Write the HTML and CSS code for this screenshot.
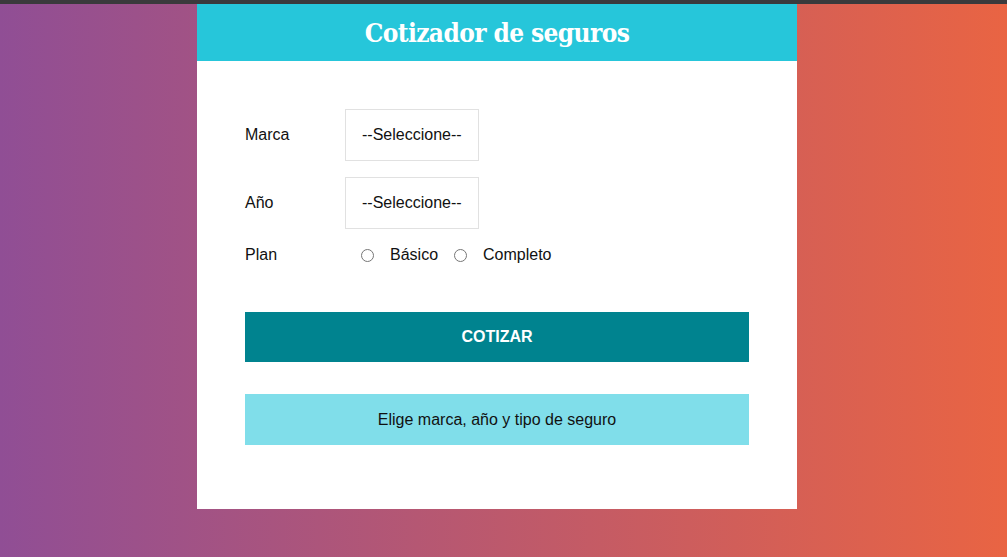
FILE: index.html
```html
<!DOCTYPE html>
<html lang="es">
<head>
<meta charset="utf-8">
<title>Cotizador de seguros</title>
<link rel="stylesheet" href="styles.css">
</head>
<body>
<div class="topbar"></div>
<div class="page">
<main class="card">
  <header class="card-header">
    <h1 class="title">Cotizador de seguros</h1>
  </header>
  <form class="form">
    <div class="field">
      <label class="field-label" for="marca">Marca</label>
      <select id="marca" class="select">
        <option>--Seleccione--</option>
      </select>
    </div>
    <div class="field">
      <label class="field-label" for="anio">Año</label>
      <select id="anio" class="select">
        <option>--Seleccione--</option>
      </select>
    </div>
    <div class="field field-plan">
      <span class="field-label">Plan</span>
      <div class="radios">
        <input type="radio" name="plan" id="basico" class="radio">
        <label for="basico">Básico</label>
        <input type="radio" name="plan" id="completo" class="radio">
        <label for="completo">Completo</label>
      </div>
    </div>
    <button type="button" class="btn">COTIZAR</button>
    <div class="message">Elige marca, año y tipo de seguro</div>
  </form>
</main>
</div>
</body>
</html>
```
FILE: styles.css
```css
html, body {
  margin: 0;
  padding: 0;
}
body {
  min-height: 557px;
  background: linear-gradient(to right, #904e95, #e96443);
  font-family: "Liberation Sans", Arial, sans-serif;
  font-size: 16px;
  color: #111;
}
.topbar {
  height: 4px;
  background: #3a3a3c;
}
.page {
  padding-right: 13px;
}
.card {
  width: 600px;
  margin: 0 auto;
  background: #fff;
}
.card-header {
  height: 57px;
  background: #26c6da;
  display: flex;
  align-items: center;
  justify-content: center;
}
.title {
  margin: 0;
  color: #fff;
  font-family: "DejaVu Serif Condensed", "DejaVu Serif", serif;
  font-weight: bold;
  font-size: 26px;
  letter-spacing: -0.6px;
}
.form {
  padding: 48px 48px 64px;
}
.field {
  display: flex;
  align-items: center;
  margin-bottom: 16px;
}
.field-label {
  flex: 0 0 100px;
}
.select {
  -webkit-appearance: none;
  appearance: none;
  border: 1px solid #e1e1e1;
  background: #fff;
  padding: 16px;
  font-family: "Liberation Sans", Arial, sans-serif;
  font-size: 16px;
  color: #111;
  line-height: 18px;
  border-radius: 0;
}
.field-plan {
  padding-top: 1px;
  margin-bottom: 48px;
}
.radios {
  display: flex;
  align-items: center;
}
.radio {
  margin: 0 16px;
  width: 13px;
  height: 13px;
}
.btn {
  display: block;
  width: 100%;
  height: 50px;
  border: 0;
  background: #00838f;
  color: #fff;
  font-family: "Liberation Sans", Arial, sans-serif;
  font-weight: bold;
  font-size: 16px;
}
.message {
  margin-top: 32px;
  height: 51px;
  display: flex;
  align-items: center;
  justify-content: center;
  background: #80deea;
}
```
